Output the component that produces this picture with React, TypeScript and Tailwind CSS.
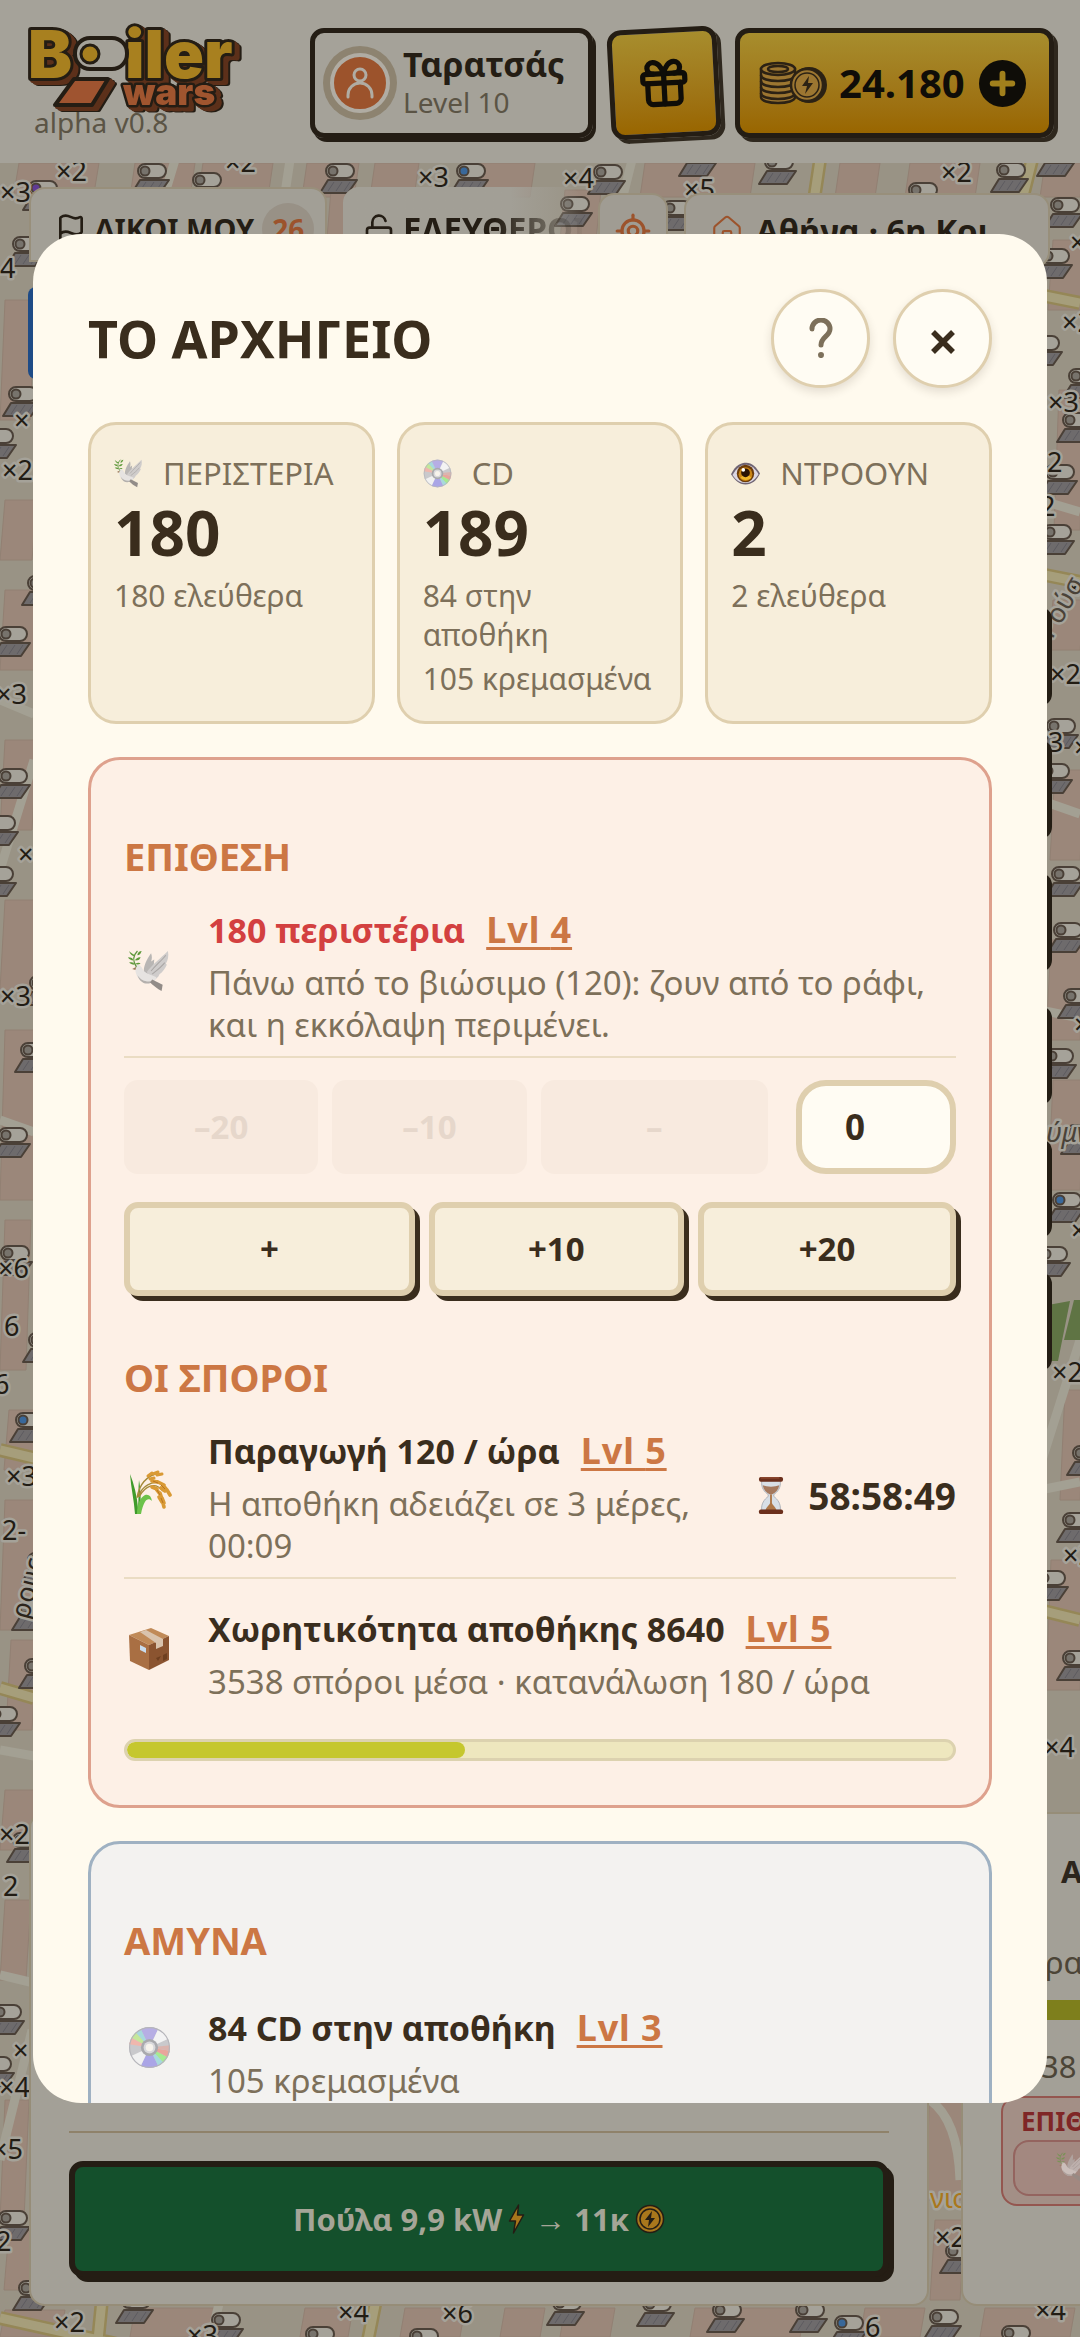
import React from 'react';
import { Flag, LockOpen, LocateFixed, House, Gift } from 'lucide-react';

type IconProps = { className?: string };

/* ---------- Emoji style drawings ---------- */

const Dove: React.FC<IconProps> = ({ className }) => (
  <svg viewBox="0 0 40 40" className={className} aria-hidden="true">
    <path d="M15 20C15 13 20 6 22 3c1 3 1 5 0 8l3-2-1 12-8 3z" fill="#b9b6b4" />
    <path d="M18 21C23 14 31 8 38 1c1 5 0 9-2 12l1 1c-2 4-4 7-7 9-1 3-4 5-7 7z" fill="#cfcccb" />
    <path d="M22 20c5-6 10-10 14-15M23 23c5-4 9-7 12-11" stroke="#aaa6a4" strokeWidth="1" fill="none" />
    <path d="M7 14c4-1 6 2 8 6 3 3 8 4 12 6-1 5-7 7-12 5-6-3-8-9-8-13z" fill="#e6e3e1" />
    <path d="M9 24c4 6 10 7 16 5-5 5-13 4-16-5z" fill="#b4b0ad" />
    <path d="M23 28l10 5-1 6c-4-2-8-5-11-8z" fill="#928c88" />
    <path d="M8 16l-4 2 3 1z" fill="#9a7a5a" />
    <path d="M9 1C5 5 4 10 8 16" stroke="#5f9440" strokeWidth="1.2" fill="none" />
    <path d="M7 5C4 4 2 2 1 1c1 3 3 5 5 5zM9 4c1-2 2-3 4-3-1 3-2 4-4 4zM5 10C3 10 1 9 0 7c3 0 5 1 5 3zM7 9c2-2 4-2 5-2-1 3-3 3-5 3zM6 14c-2 0-4-1-5-2 3-1 5 0 5 2zM7 13c2-1 4-1 5 0-2 1-4 1-5 0z" fill="#5f9a3b" />
  </svg>
);

const Disc: React.FC<IconProps> = ({ className }) => (
  <svg viewBox="0 0 40 40" className={className} aria-hidden="true">
    <circle cx="20" cy="20" r="19" fill="#c9c9cc" />
    <path d="M20 20L12 3a19 19 0 0 1 16 0z" fill="#b6aee4" />
    <path d="M20 20L28 37a19 19 0 0 1-16 0z" fill="#aaa5e6" />
    <path d="M20 20L28 3a19 19 0 0 1 9 9z" fill="#f3f3f3" />
    <path d="M20 20L12 37a19 19 0 0 1-9-9z" fill="#f1f1f1" />
    <path d="M20 20L7 6l5-3z" fill="#a7d9dd" />
    <path d="M20 20L3 11l4-5z" fill="#c4e79a" />
    <path d="M20 20L1 17l2-6z" fill="#efb7ad" />
    <path d="M20 20L33 34l-5 3z" fill="#a7d9dd" />
    <path d="M20 20L37 29l-4 5z" fill="#a5ea91" />
    <path d="M20 20L39 23l-2 6z" fill="#e9a59b" />
    <path d="M20 20L39 18l0 5z" fill="#dbb4ae" />
    <circle cx="20" cy="20" r="8" fill="#a9a9ad" />
    <circle cx="20" cy="20" r="5.500" fill="#d9d9dc" />
    <circle cx="20" cy="20" r="3.500" fill="#f7f3ec" />
    <circle cx="20" cy="20" r="18.500" fill="none" stroke="#b5b5ba" />
  </svg>
);

const Eye: React.FC<IconProps> = ({ className }) => (
  <svg viewBox="0 0 40 40" className={className} aria-hidden="true">
    <path d="M0 21C6 8 14 5 21 5c8 0 14 6 19 15-5 10-11 15-20 15C11 35 5 29 0 21z" fill="#6f6473" />
    <path d="M2 22C8 12 14 8 21 8c7 0 12 5 17 13-5 8-10 12-18 12S7 29 2 22z" fill="#dcd7e2" />
    <circle cx="20" cy="20" r="12" fill="#6b3b0a" />
    <circle cx="20" cy="21" r="9.500" fill="#c98414" />
    <path d="M13 25a9 9 0 0 0 15 0l-7-4z" fill="#efb52a" />
    <circle cx="20" cy="19" r="6" fill="#2a1204" />
    <circle cx="17" cy="15" r="2.500" fill="#fff" />
  </svg>
);

const Rice: React.FC<IconProps> = ({ className }) => (
  <svg viewBox="0 0 44 44" className={className} aria-hidden="true">
    <path d="M7 44C6 30 3 18 2 4c4 10 7 22 8 34 1-10 0-20 1-28 2 10 2 24 1 34z" fill="#3f9b2b" />
    <path d="M9 44c0-10 3-16 8-19 4-1 6 1 7 6-4-4-8-2-11 13z" fill="#6cc24a" />
    <path d="M9 28C11 15 18 6 31 3M10 27C14 16 24 10 34 14M11 27c6-11 16-16 24-6" stroke="#a58a3a" strokeWidth="1.300" fill="none" />
    <g stroke="#d99a35" strokeLinecap="round" fill="none">
      <path d="M20 6l4-3M25 4l5-2M29 5l5-1M22 9l4-1" strokeWidth="3" />
      <path d="M24 11l6 1M30 12l6 3M35 15l4 5M39 20l3 5M33 18l4 3" strokeWidth="3.600" />
      <path d="M24 17l5 2M28 19l4 5M32 23l2 6M34 28l2 5M35 33l1 4M31 27l3 5" strokeWidth="3.600" />
    </g>
    <path d="M25 11l5 2M33 15l4 4M29 20l3 5M33 28l2 5" stroke="#b87420" strokeWidth="1" />
  </svg>
);

const Parcel: React.FC<IconProps> = ({ className }) => (
  <svg viewBox="0 0 42 44" className={className} aria-hidden="true">
    <path d="M1 8L23 1l18 8-20 9z" fill="#c08a58" />
    <path d="M1 8l20 10v25L2 34z" fill="#a96f43" />
    <path d="M41 9L21 18v25l20-10z" fill="#8b5430" />
    <path d="M12 5l6-2 17 9v7l-7 3v-6z" fill="#d9c3ad" />
    <path d="M12 18l6 3v5l-6-3z" fill="#c9dced" />
    <path d="M28 31l5-2-3 5zM35 28l4-2v6l-4 2z" fill="#6e3f20" />
  </svg>
);

const Hourglass: React.FC<IconProps> = ({ className }) => (
  <svg viewBox="0 0 28 40" className={className} aria-hidden="true">
    <path d="M4 4h20c1 8-3 12-7 15v2c4 3 8 8 7 15H4c-1-7 3-12 7-15v-2C7 16 3 12 4 4z" fill="#d8dfe6" stroke="#a9aeb5" />
    <path d="M5 9c5 2 13 2 18 0-1 5-4 8-8 10h-2C9 17 6 14 5 9z" fill="#a5795e" />
    <path d="M8 36c1-4 4-5 5-8V19h2v9c1 3 4 4 5 8z" fill="#ad7647" />
    <rect x="1" y="0" width="26" height="5" rx="2" fill="#6b2f1c" />
    <rect x="1" y="35" width="26" height="5" rx="2" fill="#6b2f1c" />
    <path d="M3 1h20" stroke="#a45a3d" strokeWidth="1" />
  </svg>
);

const Bolt: React.FC<IconProps> = ({ className }) => (
  <svg viewBox="0 0 16 30" className={className} aria-hidden="true">
    <path d="M10 1L1 17h6L5 29 15 11H9z" fill="#a9771c" stroke="#241d14" strokeWidth="1.500" strokeLinejoin="round" />
  </svg>
);

const Coin: React.FC<IconProps> = ({ className }) => (
  <svg viewBox="0 0 30 30" className={className} aria-hidden="true">
    <circle cx="15" cy="15" r="13.500" fill="#a9771c" stroke="#241d14" strokeWidth="1.500" />
    <circle cx="15" cy="15" r="10" fill="none" stroke="#241d14" strokeWidth="1.500" />
    <path d="M17 7l-7 9h4l-1 7 7-9h-4z" fill="#241d14" />
  </svg>
);

const CoinStack: React.FC<IconProps> = ({ className }) => (
  <svg viewBox="0 0 68 44" className={className} aria-hidden="true">
    <path d="M2 8v28c0 4 8 6 17 6s17-2 17-6V8z" fill="#9c7631" stroke="#2c2214" strokeWidth="2.500" />
    <g fill="none" stroke="#2c2214" strokeWidth="2.500">
      <path d="M2 14c0 4 8 6 17 6s17-2 17-6M2 20c0 4 8 6 17 6s17-2 17-6M2 26c0 4 8 6 17 6s17-2 17-6M2 32c0 4 8 6 17 6s17-2 17-6" />
      <ellipse cx="19" cy="8" rx="17" ry="6" fill="#9c7631" />
      <ellipse cx="19" cy="8" rx="10" ry="3" />
    </g>
    <circle cx="50" cy="24" r="18" fill="#2c2214" />
    <circle cx="48" cy="24" r="16" fill="#9c7631" stroke="#2c2214" strokeWidth="2.500" />
    <circle cx="48" cy="24" r="12" fill="none" stroke="#2c2214" strokeWidth="1.500" />
    <path d="M50 15l-7 10h5l-2 8 8-11h-5z" fill="#2c2214" />
  </svg>
);

const Logo: React.FC = () => (
  <svg viewBox="0 0 222 80" className="h-[80px] w-[222px] overflow-visible" role="img" aria-label="Boiler Wars">
    <g className="[filter:drop-shadow(2px_2px_0_#5c301a)_drop-shadow(3px_2px_0_#5c301a)_drop-shadow(2px_1px_0_#241d14)]">
      <g fontFamily="Inter, sans-serif" fontWeight="900" fontSize="66" fill="#a8801f" stroke="#241d14" strokeWidth="6" strokeLinejoin="round" paintOrder="stroke">
        <text x="0" y="50">B</text>
        <text x="97" y="50">iler</text>
      </g>
      <path d="M46 51h34L64 77H27z" fill="#9f5430" stroke="#241d14" strokeWidth="4" strokeLinejoin="round" />
      <text x="95" y="77" fontFamily="Inter, sans-serif" fontWeight="900" fontSize="37" fill="#a0552f" stroke="#241d14" strokeWidth="5" strokeLinejoin="round" paintOrder="stroke">wars</text>
    </g>
    <rect x="47" y="10" width="52" height="31" rx="15" fill="#a5a299" stroke="#241d14" strokeWidth="4" />
    <circle cx="62" cy="26" r="9" fill="#a8801f" stroke="#241d14" strokeWidth="3" />
  </svg>
);

/* ---------- City map ---------- */

// [x, y, marker colour]
const heaters: [number, number, string?][] = [
  [137, 163], [192, 172], [325, 163], [456, 163, '#39689a'], [28, 180, '#5f3a93'], [593, 164], [684, 146],
  [764, 154], [908, 182], [996, 162], [1042, 146], [1050, 197], [12, 236], [8, 386], [-16, 428], [27, 575],
  [-2, 626], [-2, 768], [-14, 815], [-16, 866], [29, 975], [20, 1042], [-2, 1127], [0, 1245], [28, 1332],
  [15, 1412, '#39689a'], [27, 1552], [17, 1600], [24, 1658], [-12, 1706], [12, 1832], [-8, 2004], [-18, 2056],
  [-2, 2210], [18, 2280], [121, 2293], [211, 2312], [305, 2326], [409, 2328], [552, 2295], [642, 2296], [712, 2302],
  [795, 2302], [834, 2315, '#39689a'], [929, 2309], [1001, 2325], [945, 2243],
  [1040, 248], [1030, 335], [1068, 368], [1062, 412], [1045, 464], [1042, 524], [1046, 718], [1040, 763],
  [1051, 866], [1053, 922], [1063, 988], [1044, 1048], [1066, 1124], [1052, 1192, '#39689a'], [1038, 1246],
  [1072, 1445], [1062, 1512], [1036, 1570], [1062, 1650], [560, 196], [662, 200],
];

const counts: [number, number, string][] = [
  [56, 181, '×2'], [225, 172, '×2'], [418, 187, '×3'], [0, 202, '×3'], [563, 188, '×4'], [684, 199, '×5'],
  [941, 182, '×2'], [1070, 252, '×2'], [0, 278, '4'], [14, 430, '×'], [2, 480, '×2'], [-4, 704, '×3'],
  [18, 864, '×'], [0, 1006, '×3'], [-2, 1278, '×6'], [4, 1336, '6'], [-6, 1394, '6'], [6, 1486, '×3'],
  [2, 1540, '2-'], [-1, 1844, '×2'], [3, 1896, '2'], [13, 2060, '×'], [-1, 2097, '×4'], [-8, 2159, '×5'],
  [-4, 2251, '2'], [54, 2332, '×2'], [187, 2345, '×3'], [338, 2322, '×4'], [442, 2323, '×6'], [865, 2337, '6'],
  [1035, 2320, '×4'], [935, 2247, '×2'], [1062, 332, '×2'], [1048, 412, '×3'], [1047, 472, '2'], [1040, 516, '2'],
  [1066, 598, '×2'], [1050, 684, '×2'], [1048, 752, '3'], [1074, 757, '×'], [1074, 1034, '×'], [1071, 1240, '×'],
  [1052, 1382, '×2'], [1063, 1565, '×2'], [1044, 1757, '×4'],
];

const blocks = [
  [14, 163, 80, 30], [130, 163, 60, 34], [198, 163, 70, 34], [302, 163, 52, 34], [370, 163, 44, 34], [470, 163, 60, 34],
  [640, 163, 110, 34], [835, 163, 40, 34], [905, 163, 70, 34], [1040, 163, 40, 34], [326, 190, 18, 60], [560, 190, 36, 50],
  [0, 300, 30, 120], [0, 500, 32, 60], [0, 590, 34, 80], [0, 740, 32, 90], [0, 900, 34, 90], [0, 1030, 34, 170],
  [0, 1220, 26, 150], [4, 1410, 30, 60], [0, 1500, 34, 130], [6, 1640, 26, 90], [0, 1790, 32, 60], [0, 1900, 26, 80],
  [0, 2100, 24, 120], [4, 2230, 26, 60], [0, 2310, 60, 27], [130, 2308, 80, 29], [300, 2308, 48, 29], [400, 2308, 60, 29],
  [500, 2308, 40, 29], [560, 2308, 50, 29], [690, 2308, 110, 29], [860, 2308, 60, 29], [980, 2308, 90, 29],
  [926, 2050, 40, 150], [930, 2220, 30, 80], [1048, 240, 32, 70], [1054, 390, 26, 140], [1048, 600, 32, 50],
  [1050, 770, 30, 90], [1046, 940, 34, 100], [1048, 1080, 32, 110], [1060, 1390, 20, 110], [1046, 1560, 34, 130],
];

const CityMap: React.FC = () => (
  <svg className="absolute inset-0 h-full w-full" viewBox="0 0 1080 2337" preserveAspectRatio="xMidYMid slice" aria-hidden="true">
    <defs>
      <g id="heater">
        <path d="M3 17h29l-9 13H-5z" fill="#6e6b6c" stroke="#4a4037" strokeWidth="2" strokeLinejoin="round" />
        <path d="M9 19l-6 9M17 19l-6 9M25 19l-6 9" stroke="#5d5b60" strokeWidth="1" />
        <rect x="1" y="1" width="28" height="14" rx="7" fill="#a5a299" stroke="#4a4037" strokeWidth="2" />
      </g>
    </defs>
    <rect width="1080" height="2337" fill="#999385" />
    {blocks.map(([x, y, w, h], i) => (
      <path key={i} d={`M${x + 5} ${y}h${w}l-5 ${h}h${-w}z`} fill="#9b877a" stroke="#928073" strokeWidth="1" />
    ))}
    <g fill="none" stroke="#a3a093" strokeWidth="9">
      <path d="M175 160l-12 40M290 160l-6 40M632 160l-10 40M0 1975l34 8M0 2160L32 2030M0 1120l34 12M0 700l34 14M34 760L0 870M0 1750l34 6" />
      <path d="M1040 500l40 12M1040 800l40 14M1040 1010l40 8M1080 1340l-38 120M1040 1490l40-8M220 2300l-10 40M930 2100q28 20 30 80" />
    </g>
    <g fill="none" stroke="#958757" strokeWidth="14">
      <path d="M820 160l-6 40M1032 160l-10 40M0 1450l34 8M0 1688l34 10M1040 295l40 8M1040 574l40 8M1040 1610l40 10M0 2318l180 40M102 2300l-4 40M376 2300l-8 40" />
    </g>
    <g fill="none" stroke="#a69e7b" strokeWidth="9">
      <path d="M820 160l-6 40M1032 160l-10 40M0 1450l34 8M0 1688l34 10M1040 295l40 8M1040 574l40 8M1040 1610l40 10M0 2318l180 40M102 2300l-4 40M376 2300l-8 40" />
    </g>
    <path d="M1048 1305l22-4-12 60h-10zM1074 1300h6v40h-16z" fill="#5f7444" />
    {heaters.map(([x, y, dot], i) => (
      <g key={i} transform={`translate(${x} ${y})`}>
        <use href="#heater" />
        <circle cx="8" cy="8" r="4.500" fill={dot ?? '#77736c'} stroke="#4a4037" strokeWidth="2" />
      </g>
    ))}
    <g fontFamily="'Noto Sans', sans-serif" fontSize="27" fill="#221c14" stroke="#a5a299" strokeWidth="5" strokeLinejoin="round" paintOrder="stroke">
      {counts.map(([x, y, label], i) => (
        <text key={i} x={x} y={y}>{label}</text>
      ))}
      <text x="930" y="2208" fill="#a9771c">νιο</text>
      <text x="1046" y="1142" fill="#4a4238" fontStyle="italic">ύμν</text>
      <text x="1052" y="640" fill="#4a4238" transform="rotate(-60 1052 640)">Ρούσ</text>
      <text x="-6" y="1625" fill="#2c251c" transform="rotate(-75 8 1600)">ρους</text>
    </g>
  </svg>
);

/* ---------- Screen behind the dialog ---------- */

const Header: React.FC = () => (
  <header className="relative flex h-[163px] shrink-0 items-start justify-between bg-[#a5a299] pl-[28px] pr-[26px] pt-[28px]">
    <div>
      <Logo />
      <p className="pl-1.5 text-[28px] leading-[28px] text-[#5b5445]">alpha v0.8</p>
    </div>
    <div className="flex gap-[16px]">
      <button className="flex h-[110px] w-[283px] items-center rounded-[14px] border-[5px] border-[#241d14] pl-2 text-left text-[#241d14] shadow-[3px_4px_0_#241d14]">
        <span className="flex h-[74px] w-[74px] items-center justify-center rounded-full bg-[#8d8370]">
          <span className="flex h-[60px] w-[60px] items-center justify-center rounded-full border-4 border-[#b0aca3] bg-[#9c532c]">
            <svg viewBox="0 0 28 32" className="h-[32px] w-[28px]" fill="none" stroke="#b0aca3" strokeWidth="3" strokeLinecap="round">
              <circle cx="14" cy="8" r="6" />
              <path d="M2 30v-2a12 12 0 0 1 24 0v2" />
            </svg>
          </span>
        </span>
        <span className="ml-1.5">
          <span className="block text-[34px] font-bold leading-[38px]">Ταρατσάς</span>
          <span className="block text-[28px] leading-[38px] text-[#5b5445]">Level 10</span>
        </span>
      </button>
      <button aria-label="Δώρα" className="flex h-[110px] w-[110px] -rotate-3 items-center justify-center rounded-[14px] border-[5px] border-[#241d14] bg-linear-to-b from-[#a78d2d] to-[#996600] text-[#0f0d08] shadow-[4px_4px_0_#2f281e]">
        <Gift size={56} strokeWidth={2.25} />
      </button>
      <button className="flex h-[110px] w-[319px] items-center rounded-[14px] border-[5px] border-[#241d14] bg-linear-to-b from-[#a78d2d] to-[#996600] pl-[19px] text-[#0f0d08] shadow-[4px_4px_0_#2f281e]">
        <CoinStack className="h-[44px] w-[68px]" />
        <span className="ml-3 text-[40px] font-bold">24.180</span>
        <svg viewBox="0 0 48 48" className="ml-3.5 h-[47px] w-[47px]" aria-hidden="true">
          <circle cx="24" cy="24" r="24" fill="#0f0d08" />
          <path d="M24 14v20M14 24h20" stroke="#a1801c" strokeWidth="6" strokeLinecap="round" />
        </svg>
      </button>
    </div>
  </header>
);

const Tabs: React.FC = () => (
  <nav className="relative flex items-start pl-[29px] text-[33px] font-bold leading-[40px] text-[#241d14]">
    <a href="#mine" className="flex h-[75px] w-[298px] items-center whitespace-nowrap rounded-t-2xl border-2 border-[#988f7b] bg-[#a29f96] pl-6 pt-2">
      <Flag size={32} />
      <span className="ml-2 text-[29px]">ΔΙΚΟΙ ΜΟΥ</span>
      <span className="ml-2 flex h-[52px] w-[52px] items-center justify-center rounded-full bg-[#989186] text-[28px] text-[#9c532c]">26</span>
    </a>
    <a href="#free" className="ml-4 flex h-[75px] w-[239px] items-center overflow-hidden rounded-t-2xl bg-linear-to-r from-[#a29f96] from-70% to-transparent pl-5 pt-2">
      <LockOpen size={32} className="shrink-0" />
      <span className="ml-2 bg-linear-to-r from-[#241d14] from-50% to-transparent bg-clip-text text-transparent">ΕΛΕΥΘΕΡΟΙ</span>
    </a>
    <button aria-label="Η θέση μου" className="ml-4 mt-1.5 flex h-[75px] w-[70px] items-center justify-center rounded-2xl border-2 border-[#988f7b] bg-[#a09c93] text-[#9c532c]">
      <LocateFixed size={38} />
    </button>
    <a href="#area" className="ml-4 mt-1.5 flex h-[75px] w-[366px] items-center whitespace-nowrap rounded-2xl border-2 border-[#988f7b] bg-[#a09c93] pl-6">
      <House size={34} strokeWidth={1.5} className="text-[#9c532c]" />
      <span className="ml-3">Αθήνα · 6η Κοι</span>
    </a>
  </nav>
);

const Background: React.FC = () => (
  <div className="absolute inset-0 flex flex-col overflow-hidden bg-[#999385]">
    <CityMap />
    <Header />
    <main className="relative flex min-h-0 flex-1 flex-col pb-[31px] pt-[24px]">
      <Tabs />
      <div className="relative mt-[19px] flex items-start justify-between px-[28px]">
        <div className="h-[92px] w-[92px] rounded-lg bg-[#1e4b86]" />
        <div className="mt-[320px] flex flex-col gap-[34px]">
          {[1, 2, 3, 4, 5, 6].map((n) => (
            <div key={n} className="h-[99px] w-[99px] rounded-xl bg-[#241d14]" />
          ))}
        </div>
      </div>
      <div className="flex min-h-0 flex-1 items-end gap-[32px]">
        <section className="ml-[29px] flex h-[494px] w-5/6 shrink-0 flex-col justify-end rounded-2xl border-2 border-[#968d78] bg-[#a3a097] px-[38px] pb-[27px]">
          <div className="border-t-2 border-[#8f826a] pt-[28px]">
            <button className="flex h-[116px] w-full items-center justify-center rounded-[14px] border-[6px] border-[#241d14] bg-[#14502c] text-[31px] font-bold text-[#a5a597] shadow-[5px_5px_0_#241d14]">
              Πούλα 9,9 kW
              <Bolt className="ml-1.5 mr-2.5 h-[30px] w-[17px]" />
              → 11κ
              <Coin className="ml-1.5 h-[30px] w-[30px]" />
            </button>
          </div>
        </section>
        <section className="h-[494px] w-5/6 shrink-0 rounded-2xl border-2 border-[#968d78] bg-[#a3a097] pl-[38px] text-[31px] leading-[40px] text-[#4c4537]">
          <p className="pl-[60px] pt-[37px] font-bold text-[#2c251c]">ΑΜΥΝΑ</p>
          <p className="mt-[51px] pl-[44px]">ρα</p>
          <div className="mt-[18px] h-[20px] bg-[#7e7f1c]" />
          <p className="mt-[26px] pl-[40px]">38</p>
          <div className="mt-[10px] h-[110px] rounded-2xl border-2 border-[#94564f] bg-[#a38f86] pl-[10px]">
            <p className="pl-2 pt-1 text-[26px] font-bold leading-[38px] text-[#7f2626]">ΕΠΙΘΕΣΗ</p>
            <div className="h-[56px] rounded-2xl border-2 border-[#94645f] bg-[#a38880] pl-[41px] pt-2.5">
              <Dove className="h-[30px] w-[30px] opacity-60" />
            </div>
          </div>
        </section>
      </div>
    </main>
  </div>
);

/* ---------- Dialog ---------- */

type StatCardProps = { icon: React.ReactNode; label: string; value: number; lines: string[] };

const StatCard: React.FC<StatCardProps> = ({ icon, label, value, lines }) => (
  <div className="min-h-[302px] rounded-[28px] border-[3px] border-[#dfcfae] bg-[#f7eedb] px-[23px] pt-[29px] text-[30px] leading-[39px] text-[#7d705a]">
    <p className="flex items-center gap-[20px] text-[31px]">
      {icon}
      {label}
    </p>
    <p className="text-[62px] font-bold leading-[78px] text-[#3a2d1d]">{value}</p>
    {lines.map((line) => (
      <p key={line} className="mt-[5px]">{line}</p>
    ))}
  </div>
);

type RowProps = { icon: React.ReactNode; title: string; level: number; text: string; alert?: boolean; divider?: boolean; children?: React.ReactNode };

const Row: React.FC<RowProps> = ({ icon, title, level, text, alert, divider, children }) => (
  <div className={`flex min-h-[148px] items-center py-[10px] ${divider ? 'border-b-2 border-[#eadcc3]' : ''}`}>
    <div className="w-[84px] shrink-0 pb-2 pl-1">{icon}</div>
    <div className="flex-1">
      <p className={`mb-[6px] text-[34px] font-bold leading-[52px] ${alert ? 'text-[#d34040]' : 'text-[#3a2d1d]'}`}>
        {title}
        <a href="#upgrade" className="ml-[21px] text-[36px] tracking-wide text-[#cc7744] underline decoration-[3px] underline-offset-4">Lvl {level}</a>
      </p>
      <p className="text-[33px] leading-[42px] text-[#7d705a]">{text}</p>
    </div>
    {children}
  </div>
);

const Heading: React.FC<{ children: React.ReactNode }> = ({ children }) => (
  <h3 className="mb-[16px] text-[38px] font-bold leading-[44px] text-[#cc7744]">{children}</h3>
);

const roundButton = 'flex h-[99px] w-[99px] items-center justify-center rounded-full border-[3px] border-[#dfcfae] bg-[#fffcf3] shadow-[0_4px_10px_rgba(58,45,29,0.14)]';
const minusButton = 'h-[94px] rounded-[14px] bg-[#f8eadf] text-[33px] font-bold text-[#e6d7cb]';
const plusButton = 'h-[94px] rounded-[14px] border-[6px] border-[#dfcfae] bg-[#f7eedb] text-[33px] font-bold text-[#3a2d1d] shadow-[5px_5px_0_#3a2d1d]';

const Headquarters: React.FC = () => (
  <div role="dialog" aria-modal="true" aria-labelledby="hq-title" className="h-[80vh] w-full overflow-hidden rounded-[48px] bg-[#fffaee] px-[55px] pt-[55px]">
    <div className="flex items-center justify-between">
      <h2 id="hq-title" className="text-[52px] font-bold leading-[64px] text-[#3a2d1d]">ΤΟ ΑΡΧΗΓΕΙΟ</h2>
      <div className="flex gap-[23px]">
        <button aria-label="Βοήθεια" className={roundButton}>
          <svg viewBox="0 0 24 40" className="h-[40px] w-[24px]" fill="none" stroke="#7d705a" strokeWidth="5" strokeLinecap="round">
            <path d="M3 11a9 9 0 0 1 18 0c0 7-9 8-9 16" />
            <path d="M12 37v0.100" strokeWidth="6" />
          </svg>
        </button>
        <button aria-label="Κλείσιμο" className={roundButton}>
          <svg viewBox="0 0 24 24" className="mt-2 h-[24px] w-[24px]" stroke="#3a2d1d" strokeWidth="5.500">
            <path d="M2 2l20 20M22 2L2 22" />
          </svg>
        </button>
      </div>
    </div>

    {/* Stock */}
    <div className="mt-[34px] grid grid-cols-3 gap-[22px]">
      <StatCard icon={<Dove className="h-[29px] w-[29px]" />} label="ΠΕΡΙΣΤΕΡΙΑ" value={180} lines={['180 ελεύθερα']} />
      <StatCard icon={<Disc className="h-[29px] w-[29px]" />} label="CD" value={189} lines={['84 στην αποθήκη', '105 κρεμασμένα']} />
      <StatCard icon={<Eye className="h-[29px] w-[29px]" />} label="ΝΤΡΟΟΥΝ" value={2} lines={['2 ελεύθερα']} />
    </div>

    {/* Attack */}
    <section className="mt-[33px] rounded-[32px] border-[3px] border-[#dea18d] bg-[#fdf0e6] px-[33px] pb-[44px] pt-[74px]">
      <Heading>ΕΠΙΘΕΣΗ</Heading>
      <Row
        icon={<Dove className="h-[42px] w-[42px]" />}
        title="180 περιστέρια"
        level={4}
        text="Πάνω από το βιώσιμο (120): ζουν από το ράφι, και η εκκόλαψη περιμένει."
        alert
        divider
      />
      <div className="mt-[22px] flex gap-[14px]">
        <button disabled className={`${minusButton} flex-[194]`}>–20</button>
        <button disabled className={`${minusButton} flex-[194]`}>–10</button>
        <button disabled className={`${minusButton} flex-[227]`}>–</button>
        <input
          aria-label="Περιστέρια"
          defaultValue="0"
          className="ml-[14px] h-[94px] w-[160px] rounded-[30px] border-[6px] border-[#dfcfae] bg-[#fffcf3] pr-[42px] text-center text-[35px] font-bold text-[#3a2d1d]"
        />
      </div>
      <div className="mt-[28px] flex gap-[14px]">
        <button className={`${plusButton} flex-[291]`}>+</button>
        <button className={`${plusButton} flex-[254]`}>+10</button>
        <button className={`${plusButton} flex-[257]`}>+20</button>
      </div>

      <div className="mt-[59px]">
        <Heading>ΟΙ ΣΠΟΡΟΙ</Heading>
        <Row icon={<Rice className="h-[44px] w-[44px]" />} title="Παραγωγή 120 / ώρα" level={5} text="Η αποθήκη αδειάζει σε 3 μέρες, 00:09" divider>
          <p className="ml-[20px] flex shrink-0 items-center gap-[24px] text-[37px] font-bold text-[#3a2d1d]">
            <Hourglass className="h-[37px] w-[26px]" />
            58:58:49
          </p>
        </Row>
        <Row icon={<Parcel className="h-[44px] w-[42px]" />} title="Χωρητικότητα αποθήκης 8640" level={5} text="3538 σπόροι μέσα · κατανάλωση 180 / ώρα" />
        <div role="progressbar" aria-valuenow={41} aria-label="Χωρητικότητα αποθήκης" className="mt-[12px] h-[22px] overflow-hidden rounded-full border-[3px] border-[#dcd2af] bg-[#eee7be]">
          <div className="h-full rounded-full bg-[#c5c72e]" style={{ width: `${(3538 / 8640) * 100}%` }} />
        </div>
      </div>
    </section>

    {/* Defence */}
    <section className="mt-[33px] rounded-[32px] border-[3px] border-[#9fb1c2] bg-[#f3f2f0] px-[33px] pb-[44px] pt-[74px]">
      <Heading>ΑΜΥΝΑ</Heading>
      <Row icon={<Disc className="h-[43px] w-[43px]" />} title="84 CD στην αποθήκη" level={3} text="105 κρεμασμένα" />
    </section>
  </div>
);

const App: React.FC = () => {
  return (
    <div className="relative h-screen font-['Noto_Sans',sans-serif]">
      <Background />
      <div className="absolute inset-0 flex items-center px-[33px]">
        <Headquarters />
      </div>
    </div>
  );
};

export default App;
